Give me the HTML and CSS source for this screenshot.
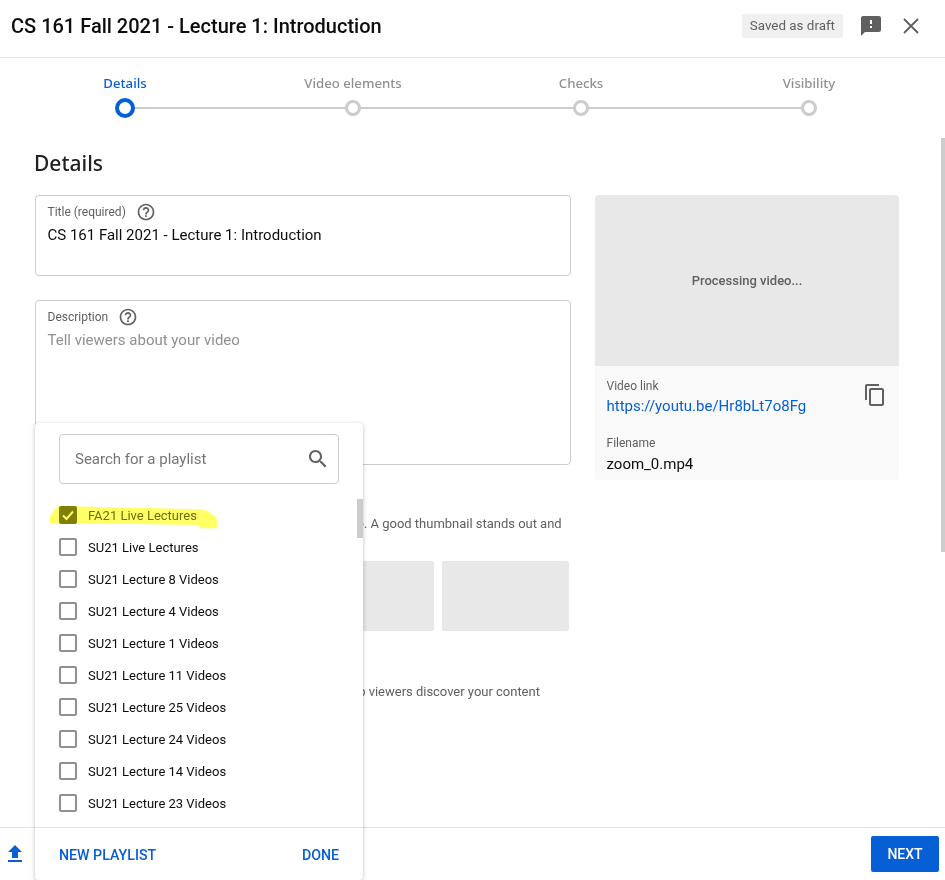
FILE: index.html
```html
<!DOCTYPE html>
<html lang="en">
<head>
<meta charset="utf-8">
<title>Details</title>
<link rel="stylesheet" href="styles.css">
</head>
<body>
<div class="dialog">
  <header class="topbar">
    <h1 class="video-title">CS 161 Fall 2021 - Lecture 1: Introduction</h1>
    <span class="draft-chip">Saved as draft</span>
    <svg class="feedback-icon" viewBox="0 0 24 24"><path d="M20 2H4c-1.1 0-1.99.9-1.99 2L2 22l4-4h14c1.1 0 2-.9 2-2V4c0-1.1-.9-2-2-2zm-7 12h-2v-2h2v2zm0-4h-2V6h2v4z"/></svg>
    <svg class="close-icon" viewBox="0 0 24 24"><path d="M5 5L19 19M19 5L5 19"/></svg>
  </header>

  <nav class="stepper">
    <div class="step step-active"><span class="step-label">Details</span><span class="step-dot"></span></div>
    <div class="step"><span class="step-label">Video elements</span><span class="step-dot"></span></div>
    <div class="step"><span class="step-label">Checks</span><span class="step-dot"></span></div>
    <div class="step"><span class="step-label">Visibility</span><span class="step-dot"></span></div>
  </nav>

  <main class="content">
    <div class="scroll-thumb"></div>
    <h2 class="section-title">Details</h2>
    <div class="columns">
      <div class="form-col">
        <div class="field field-title">
          <div class="field-label">Title (required)<svg class="help-icon" viewBox="0 0 24 24"><path d="M11 18h2v-2h-2v2zm1-16C6.48 2 2 6.48 2 12s4.48 10 10 10 10-4.48 10-10S17.52 2 12 2zm0 18c-4.41 0-8-3.59-8-8s3.59-8 8-8 8 3.59 8 8-3.59 8-8 8zm0-14c-2.21 0-4 1.79-4 4h2c0-1.1.9-2 2-2s2 .9 2 2c0 2-3 1.75-3 5h2c0-2.25 3-2.5 3-5 0-2.21-1.79-4-4-4z"/></svg></div>
          <div class="field-value">CS 161 Fall 2021 - Lecture 1: Introduction</div>
        </div>
        <div class="field field-desc">
          <div class="field-label">Description<svg class="help-icon" viewBox="0 0 24 24"><path d="M11 18h2v-2h-2v2zm1-16C6.48 2 2 6.48 2 12s4.48 10 10 10 10-4.48 10-10S17.52 2 12 2zm0 18c-4.41 0-8-3.59-8-8s3.59-8 8-8 8 3.59 8 8-3.59 8-8 8zm0-14c-2.21 0-4 1.79-4 4h2c0-1.1.9-2 2-2s2 .9 2 2c0 2-3 1.75-3 5h2c0-2.25 3-2.5 3-5 0-2.21-1.79-4-4-4z"/></svg></div>
          <div class="field-value field-placeholder">Tell viewers about your video</div>
        </div>
        <p class="hint hint-thumb">Select or upload a picture that shows what's in your video. A good thumbnail stands out and</p>
        <div class="thumbs">
          <div class="thumb"></div>
          <div class="thumb"></div>
          <div class="thumb"></div>
          <div class="thumb"></div>
        </div>
        <p class="hint hint-playlist">Add your video to one or more playlists. Playlists can help viewers discover your content</p>
      </div>
      <aside class="side-col">
        <div class="preview">Processing video...</div>
        <div class="meta">
          <div class="meta-row">
            <div>
              <div class="meta-label">Video link</div>
              <a class="meta-link">https://youtu.be/Hr8bLt7o8Fg</a>
            </div>
            <svg class="copy-icon" viewBox="0 0 24 24"><path d="M16 1H4c-1.1 0-2 .9-2 2v14h2V3h12V1zm3 4H8c-1.1 0-2 .9-2 2v14c0 1.1.9 2 2 2h11c1.1 0 2-.9 2-2V7c0-1.1-.9-2-2-2zm0 16H8V7h11v14z"/></svg>
          </div>
          <div class="meta-label meta-label-file">Filename</div>
          <div class="meta-file">zoom_0.mp4</div>
        </div>
      </aside>
    </div>
  </main>

  <footer class="bottombar">
    <svg class="upload-icon" viewBox="0 0 24 24"><path d="M9 16h6v-6h4l-7-7-7 7h4zm-4 2h14v2H5z"/></svg>
    <button class="next-btn">NEXT</button>
  </footer>

  <section class="playlist-menu">
    <div class="search-box">
      <span class="search-text">Search for a playlist</span>
      <svg class="search-icon" viewBox="0 0 24 24"><path d="M15.5 14h-.79l-.28-.27C15.41 12.59 16 11.11 16 9.5 16 5.91 13.09 3 9.5 3S3 5.91 3 9.5 5.91 16 9.5 16c1.61 0 3.09-.59 4.23-1.57l.27.28v.79l5 4.99L20.49 19l-4.99-5zm-6 0C7.01 14 5 11.99 5 9.5S7.01 5 9.5 5 14 7.01 14 9.5 11.99 14 9.5 14z"/></svg>
    </div>
    <div class="menu-scroll"></div>
    <ul class="playlist-list">
      <li class="playlist-row playlist-row-checked"><span class="box box-checked"><svg viewBox="0 0 18 18"><path d="M4 9.5L7.5 13L14 5.5"/></svg></span>FA21 Live Lectures</li>
      <li class="playlist-row"><span class="box"></span>SU21 Live Lectures</li>
      <li class="playlist-row"><span class="box"></span>SU21 Lecture 8 Videos</li>
      <li class="playlist-row"><span class="box"></span>SU21 Lecture 4 Videos</li>
      <li class="playlist-row"><span class="box"></span>SU21 Lecture 1 Videos</li>
      <li class="playlist-row"><span class="box"></span>SU21 Lecture 11 Videos</li>
      <li class="playlist-row"><span class="box"></span>SU21 Lecture 25 Videos</li>
      <li class="playlist-row"><span class="box"></span>SU21 Lecture 24 Videos</li>
      <li class="playlist-row"><span class="box"></span>SU21 Lecture 14 Videos</li>
      <li class="playlist-row"><span class="box"></span>SU21 Lecture 23 Videos</li>
    </ul>
    <div class="menu-actions">
      <span class="menu-action">NEW PLAYLIST</span>
      <span class="menu-action">DONE</span>
    </div>
    <svg class="highlight" viewBox="0 0 170 24"><path d="M0 18.3L0 12C3 6 6 2 9 1L150 4.3C157 5 161 8 163 10C166 12 167 14 167 15V23.3H150L149 20L83 19Z"/></svg>
  </section>
</div>
</body>
</html>
```
FILE: styles.css
```css
* { box-sizing: border-box; }
html, body { margin: 0; height: 100%; overflow: hidden; }
body { font-family: Roboto, "Liberation Sans", sans-serif; color: #0d0d0d; background: #fff; }
.dialog { position: relative; display: flex; flex-direction: column; height: 880px; overflow: hidden; }

.topbar { flex: none; display: flex; align-items: center; height: 58px; padding: 0 26px 6px 11px; border-bottom: 1px solid #e5e5e5; }
.video-title { flex: 1; margin: 0; font-size: 20px; font-weight: 500; line-height: 52px; color: #0d0d0d; }
.draft-chip { display: block; padding: 0 8px; height: 24px; line-height: 24px; font-size: 13.4px; color: #606060; background: #f0f0f0; border-radius: 2px; margin-right: 16px; }
.feedback-icon { width: 24px; height: 24px; fill: #606060; margin-right: 16px; }
.close-icon { width: 24px; height: 24px; stroke: #606060; stroke-width: 1.8; fill: none; margin-right: -4px; }

.stepper { flex: none; display: grid; grid-template-columns: repeat(4, 228px); padding: 0 0 0 11px; height: 78px; }
.step { position: relative; display: flex; flex-direction: column; align-items: center; padding-top: 16px; }
.step + .step::before { content: ""; position: absolute; top: 49px; right: 50%; width: 228px; height: 2px; background: #cccccc; }
.step-label { font-family: "Noto Sans", sans-serif; font-size: 13.2px; font-weight: 500; line-height: 18px; color: #909090; }
.step-active .step-label { color: #065fd4; }
.step-dot { position: relative; z-index: 1; display: block; width: 16px; height: 16px; margin-top: 8px; border: 3px solid #cccccc; border-radius: 50%; background: #fff; }
.step-active .step-dot { width: 20px; height: 20px; margin-top: 6px; border: 4px solid #065fd4; }

.content { flex: 1; min-height: 0; position: relative; overflow: hidden; padding: 12px 46px 0 35px; }
.scroll-thumb { position: absolute; top: 2px; right: 0; width: 4px; height: 414px; background: #cccccc; }
.section-title { margin: 0 0 17px -1px; font-family: "Noto Sans", sans-serif; font-size: 21px; font-weight: 500; line-height: 30px; color: #212121; }
.columns { display: flex; gap: 24px; align-items: flex-start; }
.form-col { flex: none; width: 536px; }
.side-col { flex: none; width: 304px; }

.field { border: 1px solid #cccccc; border-radius: 4px; padding: 8px 11.5px; }
.field-title { height: 81px; margin-bottom: 24px; }
.field-desc { height: 165px; }
.field-label { display: flex; align-items: center; gap: 10px; height: 16px; font-size: 12px; line-height: 16px; color: #606060; }
.help-icon { width: 20px; height: 20px; fill: #606060; }
.field-value { margin-top: 5px; font-size: 15px; line-height: 20px; color: #0d0d0d; }
.field-placeholder { color: #909090; }

.hint { margin: 0; font-size: 13px; line-height: 18px; letter-spacing: -0.016px; color: #606060; white-space: nowrap; }
.hint-thumb { margin-top: 50px; }
.hint-playlist { margin-top: 52px; }
.thumbs { display: flex; gap: 8px; margin-top: 28px; padding-left: 2px; }
.thumb { width: 127px; height: 70px; background: #e8e8e8; border-radius: 2px; }

.preview { display: flex; align-items: center; justify-content: center; height: 171px; background: #e8e8e8; border-radius: 4px 4px 0 0; font-size: 13px; font-weight: 500; color: #606060; }
.meta { height: 114px; padding: 12px 12px 0 11.5px; background: #f9f9f9; border-radius: 0 0 4px 4px; }
.meta-row { display: flex; justify-content: space-between; }
.meta-label { font-size: 12px; line-height: 16px; color: #606060; }
.meta-label-file { margin-top: 19px; }
.meta-link { display: block; margin-top: 2px; font-size: 15px; line-height: 20px; color: #065fd4; }
.meta-file { margin-top: 3px; font-size: 15px; line-height: 20px; color: #0d0d0d; }
.copy-icon { width: 24px; height: 24px; fill: #606060; margin: 5px 0 0; flex: none; }

.bottombar { flex: none; display: flex; align-items: center; justify-content: space-between; height: 53px; padding: 0 6px 1px 3px; border-top: 1px solid #e5e5e5; background: #fff; }
.upload-icon { width: 24px; height: 24px; fill: #065fd4; }
.next-btn { width: 68px; height: 36px; border: 0; border-radius: 2px; background: #065fd4; color: #fff; font: 500 14px Roboto, sans-serif; }

.playlist-menu { position: absolute; left: 35px; top: 423px; width: 328px; height: 457px; background: #fff; border-radius: 4px; box-shadow: 0 1px 4px rgba(0,0,0,.25); }
.search-box { display: flex; align-items: center; justify-content: space-between; height: 50px; margin: 11px 24px 0; padding: 0 8px 0 15px; border: 1px solid #cccccc; border-radius: 4px; }
.search-text { font-size: 15px; color: #757575; }
.search-icon { width: 24px; height: 24px; fill: #606060; }
.menu-scroll { position: absolute; top: 76px; right: 0; width: 6px; height: 39px; background: #cccccc; }
.playlist-list { list-style: none; margin: 15px 0 0; padding: 0 0 0 24px; }
.playlist-row { display: flex; align-items: center; gap: 11px; height: 32px; font-size: 13px; color: #0d0d0d; }
.playlist-row-checked { color: #6e6e10; }
.box { flex: none; display: block; width: 18px; height: 18px; border: 2px solid #909090; border-radius: 2px; }
.box-checked { background: #808010; border-color: #808010; }
.box-checked svg { display: block; width: 18px; height: 18px; margin: -2px; fill: none; stroke: #fff; stroke-width: 2; }
.menu-actions { position: absolute; left: 0; right: 0; bottom: 0; display: flex; justify-content: space-between; align-items: center; height: 53px; padding: 2px 24px 0; border-top: 1px solid #e5e5e5; }
.menu-action { font-size: 14.2px; font-weight: 500; color: #065fd4; }
.highlight { position: absolute; left: 15px; top: 82px; width: 170px; height: 24px; fill: #ffff66; mix-blend-mode: multiply; }
```
